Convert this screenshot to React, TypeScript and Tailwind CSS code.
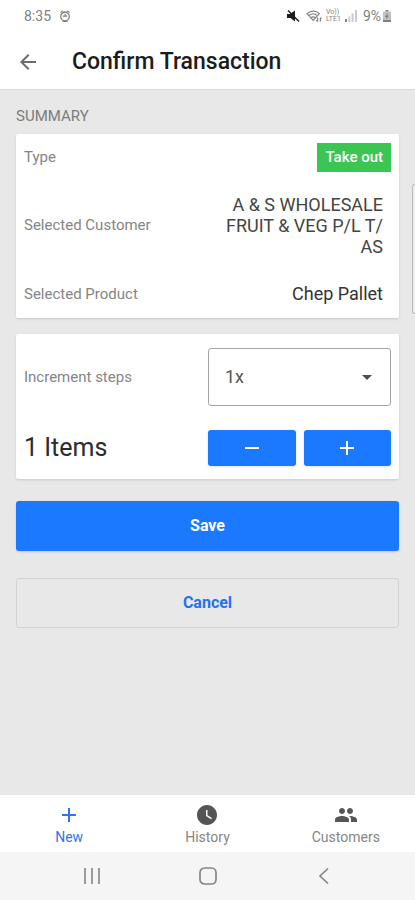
import React, { useState } from 'react';
import { MdAdd, MdArrowBack, MdPeople, MdRemove, MdWatchLater } from 'react-icons/md';

interface SummaryRowProps {
  label: string;
  className?: string;
  children: React.ReactNode;
}

interface TabProps {
  label: string;
  icon: React.ReactNode;
  active?: boolean;
}

const StatusBar: React.FC = () => (
  <div className="flex h-8 items-center justify-between px-6 text-sm text-[#808080]">
    <div className="flex items-center gap-2">
      <span>8:35</span>
      <svg viewBox="0 0 12 14" className="h-3.5 w-3" fill="none" stroke="currentColor" strokeWidth="1.3">
        <path d="M1.5 3.6 3.6 1.6M10.5 3.6 8.4 1.6M3.8 3.2h4.4" />
        <circle cx="6" cy="7.6" r="4.3" />
        <path d="M3.8 7.2h4.4M6 5.2v2.2M3.5 12.4h5" />
      </svg>
    </div>
    <div className="flex items-center">
      <svg viewBox="0 0 13 12" className="mr-1.5 h-3 w-[13px]">
        <path d="M0 4h3l5-3.6V11.6L3.5 8H0z" fill="#1c1c1c" />
        <path d="M1 .6 12 11.4" stroke="#1c1c1c" strokeWidth="1.4" />
      </svg>
      <svg viewBox="0 0 16 14" className="mr-1 h-3.5 w-4" fill="none" stroke="currentColor" strokeWidth="1.2">
        <path d="M1 4.6C4.6 1.2 10 1.2 13.4 4.6L7.2 11.4z" />
        <path d="M3 6.6c2.4-2.2 6-2.2 8.4 0M5 8.8c1.4-1.2 3-1.2 4.4 0" />
        <path d="M11.6 8.4v4M10.4 11.2l1.2 1.4M14.4 12.6v-4M14.4 8.6l1 1.2" />
      </svg>
      <span className="mr-1 flex flex-col text-[7px] leading-[7px]">
        <span>Vo))</span>
        <span>LTE1</span>
      </span>
      <svg viewBox="0 0 12 12" className="mr-1.5 size-3" fill="currentColor">
        <path d="M0 9h2v3H0z" />
        <path d="M3.3 6.5h2V12h-2zM6.6 3.5h2V12h-2zM10 0h2v12h-2z" opacity="0.4" />
      </svg>
      <span className="mr-0.5">9%</span>
      <svg viewBox="0 0 8 12" className="h-3 w-2" fill="currentColor">
        <path d="M2.5 0h3v1.5h-3z" />
        <rect y="1.5" width="8" height="10.5" rx="1" opacity="0.5" />
        <path d="M4.6 3 2 7h1.6L3.2 9.6 6 5.8H4.4zM0 10h8v2H0z" />
      </svg>
    </div>
  </div>
);

const SummaryRow: React.FC<SummaryRowProps> = ({ label, className = '', children }) => (
  <div className={`flex items-center justify-between px-2 ${className}`}>
    <dt className="text-[15px] text-[#858585]">{label}</dt>
    {children}
  </div>
);

const Tab: React.FC<TabProps> = ({ label, icon, active }) => (
  <button
    type="button"
    className={`flex flex-1 flex-col items-center pt-2 text-sm leading-5 ${active ? 'text-[#2f74ee]' : 'text-[#858585]'}`}
  >
    <span className={`flex h-6 items-center ${active ? '' : 'text-[#555555]'}`}>{icon}</span>
    {label}
  </button>
);

const App: React.FC = () => {
  const [step, setStep] = useState(1);
  const [count, setCount] = useState(1);

  return (
    <div className="flex min-h-screen flex-col bg-white font-[Roboto,sans-serif]">
      <StatusBar />
      <header className="relative z-10 flex h-[58px] items-center gap-8 border-b border-[#dcdcdc] px-4 pt-0.5">
        <button type="button" aria-label="Back" className="text-[#6b6b6b]">
          <MdArrowBack className="size-6" />
        </button>
        <h1 className="text-[23px] leading-7 font-medium text-[#1c1c1c]">Confirm Transaction</h1>
      </header>

      <main className="relative flex-1 bg-[#e8e8e8] px-4 pt-4">
        <div className="absolute top-[94px] right-0 h-[130px] w-[3px] rounded-l border border-r-0 border-[#bcbcbc] bg-[#eeeeee]" />

        <h2 className="mb-2 text-[15px] leading-5 text-[#7c7c7c]">SUMMARY</h2>
        <dl className="rounded-xs bg-white shadow-sm">
          <SummaryRow label="Type" className="h-[46px]">
            <dd className="bg-[#3bc654] px-2 text-[15px] leading-[29px] font-medium text-white">Take out</dd>
          </SummaryRow>
          <SummaryRow label="Selected Customer" className="h-[90px]">
            <dd className="w-[168px] pr-2 text-right text-lg leading-[21px] text-[#444444]">
              A &amp; S WHOLESALE FRUIT &amp; VEG P/L T/<wbr />AS
            </dd>
          </SummaryRow>
          <SummaryRow label="Selected Product" className="h-12">
            <dd className="pr-2 text-lg text-[#333333]">Chep Pallet</dd>
          </SummaryRow>
        </dl>

        <section className="mt-4 rounded-xs bg-white px-2 pt-3.5 pb-[13px] shadow-sm">
          <div className="flex items-center">
            <label htmlFor="step" className="flex-1 text-[15px] text-[#858585]">
              Increment steps
            </label>
            <div className="relative w-[183px]">
              <select
                id="step"
                value={step}
                onChange={(e) => setStep(Number(e.target.value))}
                className="h-[58px] w-full appearance-none rounded-[3px] border border-[#a5a5a5] bg-white px-4 text-lg text-[#555555]"
              >
                <option value={1}>1x</option>
                <option value={5}>5x</option>
                <option value={10}>10x</option>
              </select>
              <svg
                viewBox="0 0 10 5"
                className="pointer-events-none absolute top-[27px] right-[19px] h-[5px] w-2.5 fill-[#4d4d4d]"
              >
                <path d="M0 0h10L5 5z" />
              </svg>
            </div>
          </div>
          <div className="mt-6 flex items-center">
            <p className="flex-1 text-[25px] leading-8 text-[#2b2b2b]">{count} Items</p>
            <div className="flex w-[183px] gap-2">
              <button
                type="button"
                aria-label="Decrease"
                onClick={() => setCount(Math.max(0, count - step))}
                className="flex h-9 flex-1 items-center justify-center rounded-[3px] bg-[#1a79ff] text-white shadow-sm"
              >
                <MdRemove className="size-6" />
              </button>
              <button
                type="button"
                aria-label="Increase"
                onClick={() => setCount(count + step)}
                className="flex h-9 flex-1 items-center justify-center rounded-[3px] bg-[#1a79ff] text-white shadow-sm"
              >
                <MdAdd className="size-6" />
              </button>
            </div>
          </div>
        </section>

        <button
          type="button"
          className="mt-[22px] h-[50px] w-full rounded-[3px] bg-[#1a79ff] text-base font-bold text-white shadow-sm"
        >
          Save
        </button>
        <button
          type="button"
          className="mt-[27px] mb-6 h-[50px] w-full rounded-[3px] border border-[#d2d2d2] text-base font-bold text-[#2472ee]"
        >
          Cancel
        </button>
      </main>

      <nav className="flex h-[57px] bg-white">
        <Tab label="New" active icon={<MdAdd className="size-6" />} />
        <Tab label="History" icon={<MdWatchLater className="size-6" />} />
        <Tab label="Customers" icon={<MdPeople className="size-6" />} />
      </nav>

      <div className="flex h-12 items-center justify-around bg-[#f5f5f5] px-[34px] text-[#858585]">
        <button type="button" aria-label="Recent apps">
          <svg viewBox="0 0 16 16" className="size-4" fill="none" stroke="currentColor" strokeWidth="1.6">
            <path d="M1 0v16M8 0v16M15 0v16" />
          </svg>
        </button>
        <button type="button" aria-label="Home">
          <svg viewBox="0 0 18 18" className="size-[18px]" fill="none" stroke="currentColor" strokeWidth="1.7">
            <rect x="1" y="1" width="16" height="16" rx="4.5" />
          </svg>
        </button>
        <button type="button" aria-label="Go back">
          <svg viewBox="0 0 16 16" className="size-4" fill="none" stroke="currentColor" strokeWidth="1.6">
            <path d="M12 .5 4 8l8 7.5" />
          </svg>
        </button>
      </div>
    </div>
  );
};

export default App;
